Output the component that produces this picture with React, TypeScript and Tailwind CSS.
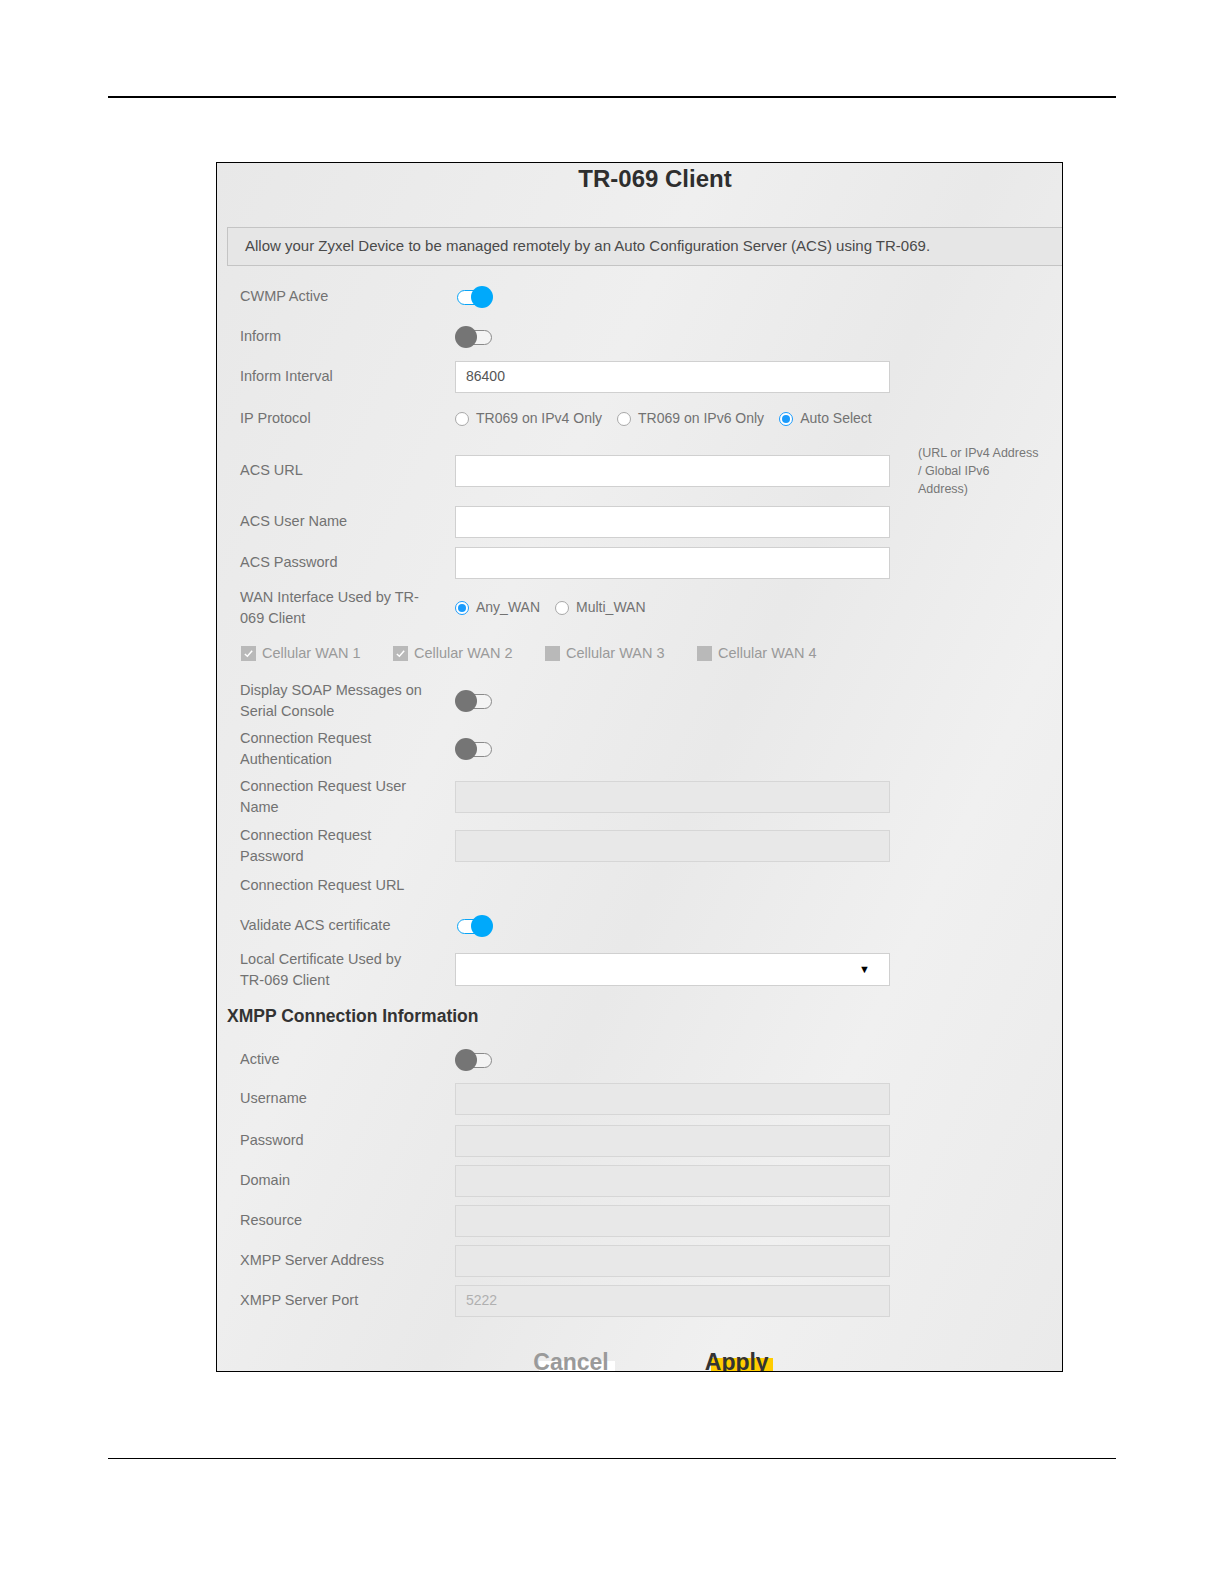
import React from "react";

const font = { fontFamily: '"Liberation Sans", Arial, sans-serif' };

const Toggle = ({ on }: { on: boolean }) => (
  <div className="relative w-[38px] h-[22px]">
    <div
      className={
        on
          ? "absolute left-[2px] top-[4px] w-[30px] h-[15px] rounded-full border-[1.5px] border-[#0aa4f6] bg-white"
          : "absolute left-[6px] top-[4px] w-[31px] h-[15px] rounded-full border-[1.5px] border-[#8a8a8a] bg-[#f4f4f4]"
      }
    />
    <div
      className={
        on
          ? "absolute right-0 top-0 w-[22px] h-[22px] rounded-full bg-[#00a9fb]"
          : "absolute left-0 top-0 w-[22px] h-[22px] rounded-full bg-[#757575]"
      }
    />
  </div>
);

const Radio = ({ checked, label }: { checked?: boolean; label: string }) => (
  <label className="flex items-center gap-[7px] text-[14px] text-[#727272]">
    {checked ? (
      <span className="w-[14px] h-[14px] rounded-full border-[1.5px] border-[#1a9bfc] bg-white flex items-center justify-center">
        <span className="w-[8px] h-[8px] rounded-full bg-[#1a9bfc]" />
      </span>
    ) : (
      <span className="w-[14px] h-[14px] rounded-full border border-[#a8a8a8] bg-white" />
    )}
    {label}
  </label>
);

const Check = ({ checked, label }: { checked?: boolean; label: string }) => (
  <div className="w-[152px] flex items-center gap-[6px] text-[14.5px] text-[#9a9a9a]">
    <span className="w-[15px] h-[15px] bg-[#b9b9b9] flex items-center justify-center">
      {checked && (
        <svg width="11" height="11" viewBox="0 0 12 12">
          <path d="M2 6.5 L4.8 9 L10 3" stroke="#fff" strokeWidth="1.6" fill="none" />
        </svg>
      )}
    </span>
    {label}
  </div>
);

const Input = ({ value, disabled, placeholder }: { value?: string; disabled?: boolean; placeholder?: string }) => (
  <div
    className={
      disabled
        ? "w-[435px] h-[32px] border border-[#d6d6d6] bg-[#e8e8e8] px-[10px] flex items-center text-[14px] text-[#b0b0b0]"
        : "w-[435px] h-[32px] border border-[#d0d0d0] bg-white px-[10px] flex items-center text-[14px] text-[#555]"
    }
  >
    {value || placeholder || ""}
  </div>
);

const Row = ({ h, label, children }: { h: string; label: string; children?: React.ReactNode }) => (
  <div className={`flex items-center ${h}`}>
    <div className="w-[215px] pr-[28px] text-[14.5px] leading-[21px] text-[#727272]">{label}</div>
    <div className="flex items-center">{children}</div>
  </div>
);

export default function App() {
  return (
    <div className="bg-white w-[1224px] h-[1584px] relative" style={font}>
      <div className="pt-[96px] pl-[108px]">
        <div className="w-[1008px] h-[1.5px] bg-black" />
      </div>

      <div className="mt-[64px] ml-[216px] w-[847px] h-[1210px] border border-black overflow-hidden bg-[linear-gradient(115deg,#e8e8e8_0%,#efefef_35%,#e9e9e9_55%,#f0f0f0_75%,#eaeaea_100%)]">
        <div className="ml-[10px] w-[856px]">
          <div className="h-[64px] text-center text-[24px] leading-[32px] font-bold text-[#2e2e2e]">
            TR-069 Client
          </div>
          <div className="h-[39px] border border-[#c4c4c4] bg-[#e6e6e6] pl-[17px] flex items-center text-[15px] text-[#4a4a4a]">
            Allow your Zyxel Device to be managed remotely by an Auto Configuration Server (ACS) using TR-069.
          </div>

          <div className="pl-[13px] mt-[11px]">
            <Row h="h-[40px]" label="CWMP Active">
              <Toggle on />
            </Row>
            <Row h="h-[40px]" label="Inform">
              <Toggle on={false} />
            </Row>
            <Row h="h-[40px]" label="Inform Interval">
              <Input value="86400" />
            </Row>
            <Row h="h-[44px]" label="IP Protocol">
              <div className="flex items-center gap-[15px]">
                <Radio label="TR069 on IPv4 Only" />
                <Radio label="TR069 on IPv6 Only" />
                <Radio checked label="Auto Select" />
              </div>
            </Row>
            <Row h="h-[60px]" label="ACS URL">
              <Input />
              <div className="ml-[28px] w-[122px] text-[12.5px] leading-[18px] text-[#777]">
                (URL or IPv4 Address / Global IPv6 Address)
              </div>
            </Row>
            <Row h="h-[42px]" label="ACS User Name">
              <Input />
            </Row>
            <Row h="h-[40px]" label="ACS Password">
              <Input />
            </Row>
            <Row h="h-[50px]" label="WAN Interface Used by TR-069 Client">
              <div className="flex items-center gap-[15px]">
                <Radio checked label="Any_WAN" />
                <Radio label="Multi_WAN" />
              </div>
            </Row>
            <div className="h-[42px] flex items-center pl-[1px]">
              <Check checked label="Cellular WAN 1" />
              <Check checked label="Cellular WAN 2" />
              <Check label="Cellular WAN 3" />
              <Check label="Cellular WAN 4" />
            </div>
            <Row h="h-[52px]" label="Display SOAP Messages on Serial Console">
              <Toggle on={false} />
            </Row>
            <Row h="h-[44px]" label="Connection Request Authentication">
              <Toggle on={false} />
            </Row>
            <Row h="h-[52px]" label="Connection Request User Name">
              <Input disabled />
            </Row>
            <Row h="h-[46px]" label="Connection Request Password">
              <Input disabled />
            </Row>
            <Row h="h-[34px]" label="Connection Request URL" />
            <Row h="h-[46px]" label="Validate ACS certificate">
              <Toggle on />
            </Row>
            <Row h="h-[42px]" label="Local Certificate Used by TR-069 Client">
              <div className="w-[435px] h-[33px] border border-[#d0d0d0] bg-white flex items-center justify-end pr-[19px] text-[11px] text-black">
                ▼
              </div>
            </Row>
          </div>

          <div className="h-[52px] flex items-center text-[17.5px] font-bold text-[#333]">
            XMPP Connection Information
          </div>

          <div className="pl-[13px]">
            <Row h="h-[34px]" label="Active">
              <Toggle on={false} />
            </Row>
            <Row h="h-[44px]" label="Username">
              <Input disabled />
            </Row>
            <Row h="h-[40px]" label="Password">
              <Input disabled />
            </Row>
            <Row h="h-[40px]" label="Domain">
              <Input disabled />
            </Row>
            <Row h="h-[40px]" label="Resource">
              <Input disabled />
            </Row>
            <Row h="h-[40px]" label="XMPP Server Address">
              <Input disabled />
            </Row>
            <Row h="h-[40px]" label="XMPP Server Port">
              <Input disabled placeholder="5222" />
            </Row>
          </div>

          <div className="mt-[27px] pr-[10px] flex justify-center gap-[86px]">
            <div className="relative px-[6px] text-[23px] leading-[28px] font-bold text-[#9a9a9a]">
              <span className="absolute left-[12px] right-0 bottom-0 h-[15px] bg-white" />
              <span className="relative">Cancel</span>
            </div>
            <div className="relative px-[4px] text-[23px] leading-[28px] font-bold text-[#333]">
              <span className="absolute left-[10px] right-0 bottom-0 h-[18px] bg-[#ffcc00]" />
              <span className="relative">Apply</span>
            </div>
          </div>
        </div>
      </div>

      <div className="pt-[86px] pl-[108px]">
        <div className="w-[1008px] h-[1.5px] bg-black" />
      </div>
    </div>
  );
}
